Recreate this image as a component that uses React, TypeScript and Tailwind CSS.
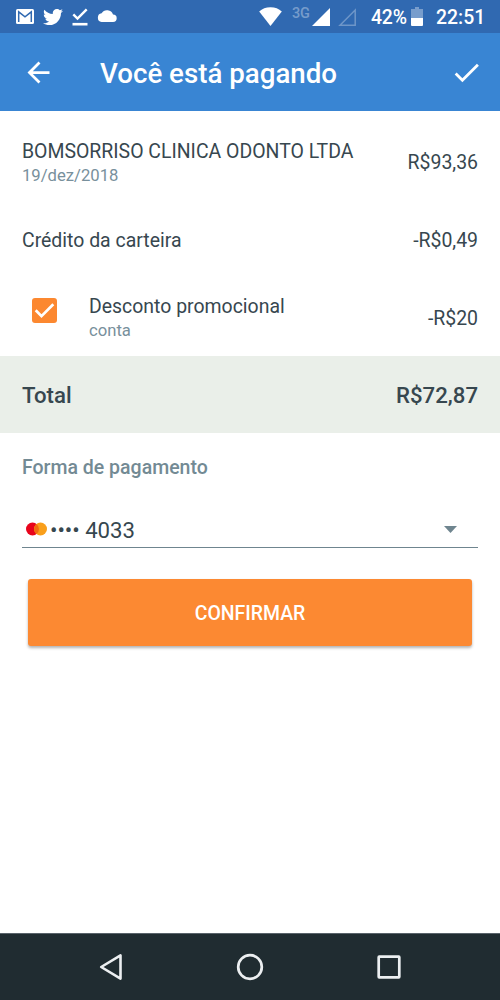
import type { ReactNode } from "react"
//Icons
import { FaTwitter } from "react-icons/fa"
import { MdArrowBack, MdCheck } from "react-icons/md"

function StatusBar() {
  return (
    <div className="flex h-[33px] items-center bg-[#3069b1] pl-[15.5px] pr-[15px] text-white">
      <svg className="h-[15px] w-[18px]" viewBox="0 0 18 15">
        <rect width="18" height="15" rx="1.5" fill="currentColor" />
        <path d="M2.7 13V2.9L9 7.8l6.3-4.9V13" fill="none" stroke="#3069b1" strokeWidth="1.5" />
      </svg>
      <FaTwitter className="ml-[9px] size-[20px]" />
      <svg className="ml-[9px] h-[18px] w-4" viewBox="0 0 16 18">
        <path d="M1.3 6.3l4.2 4.2L14.7 1.3" fill="none" stroke="currentColor" strokeWidth="2.4" />
        <path d="M.5 16.2h15" stroke="currentColor" strokeWidth="2.6" />
      </svg>
      <svg className="mb-[2px] ml-[9px] h-3 w-5" viewBox="0 0 20 12">
        <path d="M16 4.6A6.3 6.3 0 0 0 4.6 3.3 4.4 4.4 0 0 0 4.6 12H16a3.7 3.7 0 0 0 0-7.4z" fill="currentColor" />
      </svg>

      <svg className="ml-auto h-[19px] w-[23px]" viewBox="0 0 23 19">
        <path d="M11.5 19L.2 4.600Q4.600 .3 11.500 .3T22.800 4.600z" fill="currentColor" />
      </svg>
      <span className="mb-[4px] ml-[10px] w-[20px] text-[14.500px] font-medium leading-none tracking-[-0.3px] text-white/35">3G</span>
      <svg className="h-[18px] w-[18px]" viewBox="0 0 18 18">
        <path d="M18 0v18H0z" fill="currentColor" />
      </svg>
      <svg className="ml-2 h-[18px] w-[18px] text-white/30" viewBox="0 0 18 18">
        <path d="M17.200 2v15.200H2z" fill="none" stroke="currentColor" strokeWidth="1.500" />
      </svg>
      <span className="ml-[15px] w-[36px] pt-[2px] text-[19.400px] font-medium leading-none tracking-[-0.2px]">42%</span>
      <svg className="ml-1 h-[19px] w-3" viewBox="0 0 12 19">
        <path d="M4 0h4v2h4v9H0V2h4z" fill="#fff" fillOpacity=".35" />
        <path d="M0 11h12v7a1 1 0 0 1-1 1H1a1 1 0 0 1-1-1z" fill="#fff" />
      </svg>
      <span className="ml-[13px] w-[49px] pt-[2px] text-[19.400px] font-medium leading-none">22:51</span>
    </div>
  )
}

function Row({ children, value, className }: { children: ReactNode; value: string; className: string }) {
  return (
    <div className={`flex items-center justify-between px-[22px] text-[19.440px] leading-6 ${className}`}>
      {children}
      <span>{value}</span>
    </div>
  )
}

export default function App() {
  return (
    <div className="flex h-[1000px] w-[500px] flex-col bg-white font-[Roboto,sans-serif] text-[#37474f]">
      <StatusBar />

      <header className="flex h-[78px] items-center bg-[#3985d3] pl-[22px] pr-[17px] text-white">
        <button aria-label="Voltar">
          <MdArrowBack className="size-[33px]" />
        </button>
        <h1 className="ml-[45px] pt-[3px] text-[27.700px] font-medium leading-none">Você está pagando</h1>
        <button aria-label="Confirmar" className="ml-auto">
          <MdCheck className="size-[33px]" />
        </button>
      </header>

      <main className="flex-1">
        <Row value="R$93,36" className="h-[102px] pt-[2px]">
          <div className="pt-[2px]">
            <p>BOMSORRISO CLINICA ODONTO LTDA</p>
            <p className="text-[16.670px] text-[#78909c]">19/dez/2018</p>
          </div>
        </Row>
        <Row value="-R$0,49" className="h-[54px] pt-[2px]">
          <p>Crédito da carteira</p>
        </Row>
        <Row value="-R$20" className="h-[89px] pt-[14px]">
          <div className="flex flex-1 items-center">
            <span role="checkbox" aria-checked="true" className="mb-[16px] ml-[10px] flex size-[25px] items-center justify-center rounded-[3px] bg-[#fc8830]">
              <svg className="size-[25px]" viewBox="0 0 25 25">
                <path d="M3.700 12.300l5.800 5.800L21.300 6.300" fill="none" stroke="#fff" strokeWidth="2.700" />
              </svg>
            </span>
            <div className="ml-8">
              <p>Desconto promocional</p>
              <p className="text-[16.670px] text-[#78909c]">conta</p>
            </div>
          </div>
        </Row>

        <div className="flex h-[77px] items-center justify-between bg-[#eaefe9] px-[22px] pt-[2px] text-[22.200px] font-medium">
          <span>Total</span>
          <span>R$72,87</span>
        </div>

        <div className="px-[22px] pt-[23px]">
          <p className="text-[19.500px] font-medium leading-6 text-[#738a94]">Forma de pagamento</p>
          <div className="mt-[32px] flex h-[36px] items-center border-b border-[#6f858f]">
            <svg className="mb-px ml-[4px] h-[14px] w-[21px]" viewBox="0 0 21 14">
              <circle cx="6.500" cy="7" r="6.500" fill="#e8041c" />
              <circle cx="14.500" cy="7" r="6.500" fill="#f99f1b" />
              <path d="M10.500 1.900a6.500 6.500 0 0 1 0 10.200a6.500 6.500 0 0 1 0-10.200z" fill="#f26a10" />
            </svg>
            <span className="ml-[3px] pt-[2px] text-[22.200px] leading-none tracking-[-0.05px]">•••• 4033</span>
            <svg className="ml-auto mr-[21px] h-[7px] w-[13px]" viewBox="0 0 13 7">
              <path d="M0 0h13L6.500 7z" fill="#6f858f" />
            </svg>
          </div>
          <button className="mx-[6px] mt-[31px] block h-[67px] w-[444px] rounded-[3px] bg-[#fc8932] pt-[2px] text-[19.440px] font-medium text-white shadow-[0_2px_3px_rgba(0,0,0,0.3)]">CONFIRMAR</button>
        </div>
      </main>

      <nav className="flex h-[67px] items-center border-t border-[#59636a] bg-[#202c31] pl-[99px] text-[#eceff1]">
        <svg className="h-[28px] w-[23px]" viewBox="0 0 23 28">
          <path d="M21.500 2.400v23.200L2.200 14z" fill="none" stroke="currentColor" strokeWidth="2.600" strokeLinejoin="round" />
        </svg>
        <svg className="ml-[114px] size-7" viewBox="0 0 28 28">
          <circle cx="14" cy="14" r="11.800" fill="none" stroke="currentColor" strokeWidth="2.700" />
        </svg>
        <svg className="ml-[113px] size-6" viewBox="0 0 24 24">
          <rect x="1.700" y="1.700" width="20.600" height="20.600" rx=".5" fill="none" stroke="currentColor" strokeWidth="2.700" />
        </svg>
      </nav>
    </div>
  )
}
